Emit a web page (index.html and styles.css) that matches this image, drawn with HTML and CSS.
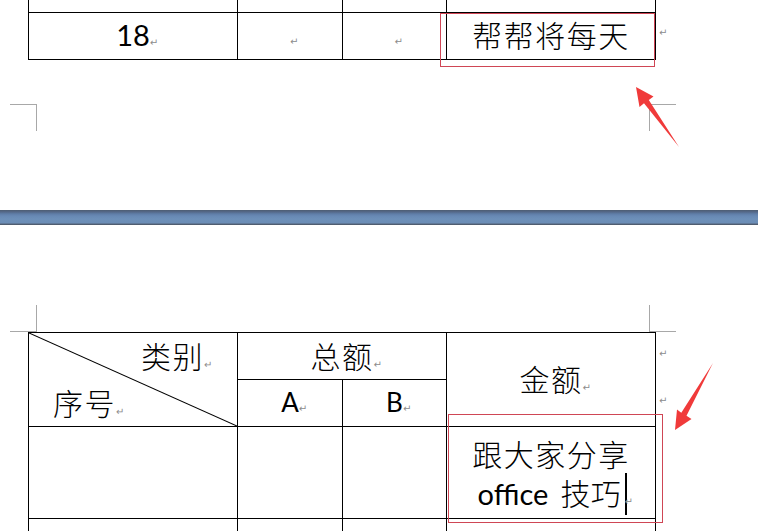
FILE: index.html
```html
<!DOCTYPE html>
<html lang="zh-CN">
<head>
<meta charset="utf-8">
<title>表格斜线表头</title>
<link rel="stylesheet" href="styles.css">
</head>
<body>
<div class="doc">
  <section class="page page-top">
    <table class="grid grid-top">
      <colgroup><col class="c1"><col class="c2"><col class="c3"><col class="c4"><col class="cend"></colgroup>
      <tr class="r-cut"><td></td><td></td><td></td><td></td><td class="end"></td></tr>
      <tr class="r-main">
        <td><span class="lat num">18</span><i class="pm">↵</i></td>
        <td><i class="pm pm-low">↵</i></td>
        <td><i class="pm pm-low">↵</i></td>
        <td><span class="cjk">帮帮将每天</span></td>
        <td class="end"><i class="pm">↵</i></td>
      </tr>
    </table>
    <div class="marks marks-top"><span class="mark m-tl"></span><span class="mark m-tr"></span></div>
  </section>

  <div class="bar"></div>

  <section class="page page-bottom">
    <div class="marks marks-bottom"><span class="mark m-bl"></span><span class="mark m-br"></span></div>
    <table class="grid grid-bottom">
      <colgroup><col class="c1"><col class="c2"><col class="c3"><col class="c4"><col class="cend"></colgroup>
      <tr class="r-h1">
        <td class="diag" rowspan="2">
          <div class="diag-in">
            <span class="cjk d-top">类别<i class="pm">↵</i></span>
            <span class="cjk d-bot">序号<i class="pm">↵</i></span>
          </div>
        </td>
        <td colspan="2"><span class="cjk">总额</span><i class="pm">↵</i></td>
        <td rowspan="2"><span class="cjk">金额</span><i class="pm">↵</i></td>
        <td class="end"><i class="pm">↵</i></td>
      </tr>
      <tr class="r-h2">
        <td><span class="lat ab">A</span><i class="pm">↵</i></td>
        <td><span class="lat ab">B</span><i class="pm">↵</i></td>
        <td class="end"><i class="pm">↵</i></td>
      </tr>
      <tr class="r-body">
        <td></td><td></td><td></td>
        <td>
          <div class="line cjk">跟大家分享</div>
          <div class="line"><span class="lat office">office</span><span class="cjk gap">技巧</span><span class="caret"></span><i class="pm pm-caret">↵</i></div>
        </td>
        <td class="end"></td>
      </tr>
      <tr class="r-next">
        <td></td><td></td><td></td><td></td>
        <td class="end end-last"><i class="pm">↵</i></td>
      </tr>
    </table>
  </section>
</div>

<svg class="annot" width="758" height="531" viewBox="0 0 758 531" aria-hidden="true">
  <rect x="440.5" y="13.5" width="214" height="53" fill="none" stroke="#cf4655" stroke-width="1"/>
  <rect x="448.5" y="414.5" width="214" height="108" fill="none" stroke="#cf4655" stroke-width="1"/>
  <polygon points="636,87 653.5,96.5 648.8,99.9 679,147 644,103.3 639.5,107" fill="#f03a3a"/>
  <polygon points="675,430 677,409.5 681.3,412.8 713,363 686.5,415.8 691.5,419" fill="#f03a3a"/>
</svg>
</body>
</html>
```

FILE: styles.css
```css
* { box-sizing: border-box; }

html, body {
  margin: 0;
  padding: 0;
  background: #ffffff;
}

body {
  width: 758px;
  height: 531px;
  overflow: hidden;
  position: relative;
  font-family: "Noto Sans CJK SC", sans-serif;
  color: #000;
}

.page-top {
  height: 210px;
}

.page-bottom {
  padding-top: 80px;
}

/* page corner marks */
.marks {
  display: flex;
  justify-content: space-between;
  width: 676px;
  padding-left: 10px;
}
.marks-top { margin-top: 44px; }

.mark {
  display: block;
  width: 27px;
  height: 27px;
  border: 0 solid #a8a8a8;
}
.m-tl { border-top-width: 1px; border-right-width: 1px; }
.m-tr { border-top-width: 1px; border-left-width: 1px; }
.m-bl { border-bottom-width: 1px; border-right-width: 1px; }
.m-br { border-bottom-width: 1px; border-left-width: 1px; }

/* divider between pages */
.bar {
  height: 15px;
  background: linear-gradient(to bottom,
    #4e5d72 0px, #55698a 2px, #5f7ea8 4px, #6889b4 6px,
    #6d90b9 9px, #6b8db6 13px, #55647a 14px, #4a5566 15px);
}

/* tables */
.grid {
  border-collapse: collapse;
  table-layout: fixed;
  margin-left: 28px;
  width: 653px;
}
col.c1 { width: 209px; }
col.c2 { width: 105px; }
col.c3 { width: 104px; }
col.c4 { width: 209px; }
col.cend { width: 26px; }

.grid td {
  padding: 0;
  border: 1px solid #000;
  text-align: center;
  vertical-align: middle;
  white-space: nowrap;
}
.grid td.end {
  border: none;
  text-align: left;
  vertical-align: top;
  padding: 5px 0 0 3px;
}
.grid td.end-last { padding-top: 4px; }

.r-cut td { height: 12px; border-top: none; }
.r-main td { height: 47px; }
.r-h1 td { height: 47px; }
.r-h2 td { height: 47px; }
.r-body td { height: 92px; }
.r-next td { height: 20px; }

/* text styles */
.cjk {
  font-family: "Noto Sans CJK SC", sans-serif;
  font-weight: 300;
  font-size: 30px;
  line-height: 1;
  letter-spacing: 1.5px;
}
.lat {
  font-family: Lato, "Liberation Sans", sans-serif;
  line-height: 1;
}
.num { font-size: 29px; }
.ab { font-size: 26px; }
.office { font-size: 29px; }
.gap { margin-left: 12px; letter-spacing: 0.5px; }

/* paragraph marks */
.pm {
  font-style: normal;
  font-family: "DejaVu Sans", sans-serif;
  font-size: 10px;
  line-height: 1;
  letter-spacing: 0;
  color: #8c8c8c;
  display: inline-block;
  width: 0;
  overflow: visible;
}
.pm-low { position: relative; top: 2px; }
.pm-caret { margin-left: -3px; }
.end .pm { width: auto; }

/* diagonal header cell */
.diag {
  background-image: url("data:image/svg+xml,%3Csvg xmlns='http://www.w3.org/2000/svg' width='100%25' height='100%25'%3E%3Cline x1='0' y1='0' x2='100%25' y2='100%25' stroke='%23000' stroke-width='1.1'/%3E%3C/svg%3E");
  background-size: 100% 100%;
  background-repeat: no-repeat;
}
.diag-in {
  height: 93px;
  display: flex;
  flex-direction: column;
  justify-content: space-between;
  padding: 7px 33px 9px 24px;
}
.d-top { align-self: flex-end; }
.d-bot { align-self: flex-start; }

/* body cell with wrapped text */
.line {
  line-height: 39px;
  height: 39px;
}
.caret {
  display: inline-block;
  width: 2px;
  height: 42px;
  background: #000;
  margin-left: 4px;
  vertical-align: -10px;
}

/* annotation overlay */
.annot {
  position: absolute;
  left: 0;
  top: 0;
  pointer-events: none;
}
```
